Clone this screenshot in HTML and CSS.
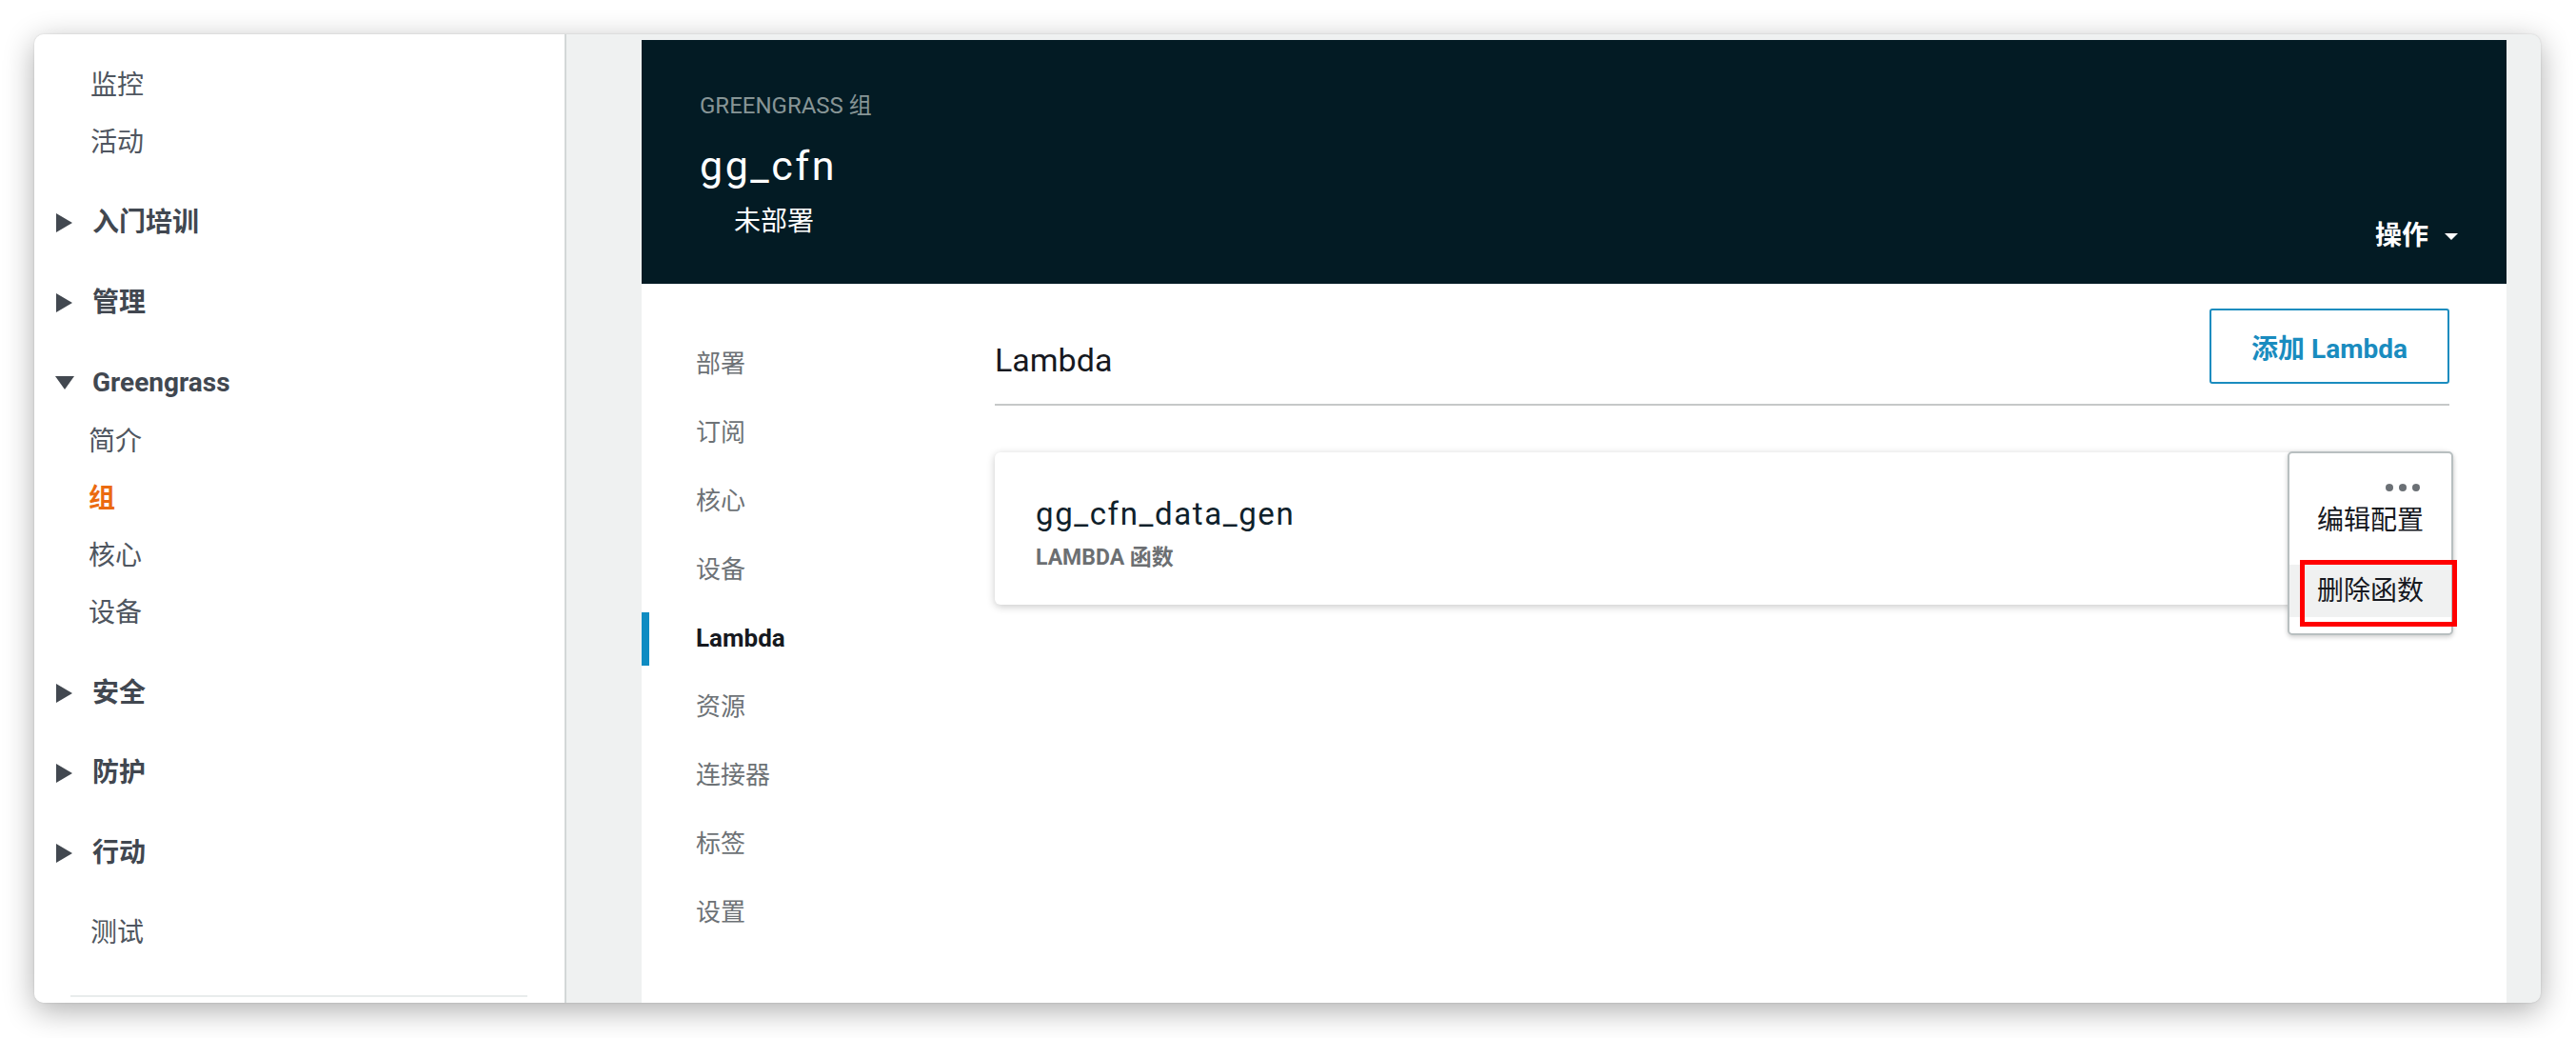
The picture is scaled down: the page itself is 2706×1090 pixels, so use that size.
FILE: index.html
```html
<!DOCTYPE html>
<html lang="zh-CN">
<head>
<meta charset="utf-8">
<title>Greengrass 组 - gg_cfn</title>
<link rel="stylesheet" href="styles.css">
</head>
<body>
<div class="window">
  <aside class="sidebar">
    <ul class="nav-block">
      <li class="nav-item">监控</li>
      <li class="nav-item">活动</li>
    </ul>
    <div class="nav-block nav-head"><span class="caret"><svg width="17" height="20" viewBox="0 0 17 20"><polygon points="0,0 17,10 0,20" fill="#424850"/></svg></span>入门培训</div>
    <div class="nav-block nav-head"><span class="caret"><svg width="17" height="20" viewBox="0 0 17 20"><polygon points="0,0 17,10 0,20" fill="#424850"/></svg></span>管理</div>
    <div class="nav-block">
      <div class="nav-head"><span class="caret caret-down"><svg width="20" height="14" viewBox="0 0 20 14"><polygon points="0,0 20,0 10,14" fill="#424850"/></svg></span>Greengrass</div>
      <ul class="nav-sub">
        <li class="nav-item">简介</li>
        <li class="nav-item nav-active">组</li>
        <li class="nav-item">核心</li>
        <li class="nav-item">设备</li>
      </ul>
    </div>
    <div class="nav-block nav-head"><span class="caret"><svg width="17" height="20" viewBox="0 0 17 20"><polygon points="0,0 17,10 0,20" fill="#424850"/></svg></span>安全</div>
    <div class="nav-block nav-head"><span class="caret"><svg width="17" height="20" viewBox="0 0 17 20"><polygon points="0,0 17,10 0,20" fill="#424850"/></svg></span>防护</div>
    <div class="nav-block nav-head"><span class="caret"><svg width="17" height="20" viewBox="0 0 17 20"><polygon points="0,0 17,10 0,20" fill="#424850"/></svg></span>行动</div>
    <ul class="nav-block">
      <li class="nav-item">测试</li>
    </ul>
    <div class="nav-divider"></div>
  </aside>

  <main class="main">
    <header class="hero">
      <div class="hero-left">
        <div class="eyebrow">GREENGRASS 组</div>
        <h1 class="hero-title">gg_cfn</h1>
        <div class="hero-status">未部署</div>
      </div>
      <div class="hero-action">操作<svg class="hero-caret" width="14" height="7" viewBox="0 0 14 7"><polygon points="0,0 14,0 7,7" fill="#ffffff"/></svg></div>
    </header>

    <section class="panel">
      <nav class="tabs">
        <div class="tab">部署</div>
        <div class="tab">订阅</div>
        <div class="tab">核心</div>
        <div class="tab">设备</div>
        <div class="tab tab-active">Lambda</div>
        <div class="tab">资源</div>
        <div class="tab">连接器</div>
        <div class="tab">标签</div>
        <div class="tab">设置</div>
      </nav>

      <div class="content">
        <div class="content-head">
          <h2 class="content-title">Lambda</h2>
          <button class="btn-outline">添加 Lambda</button>
        </div>

        <div class="card">
          <div class="card-title">gg_cfn_data_gen</div>
          <div class="card-sub">LAMBDA 函数</div>

          <div class="menu">
            <div class="menu-dots"><span></span><span></span><span></span></div>
            <div class="menu-item">编辑配置</div>
            <div class="menu-item menu-item-hover">删除函数<span class="annot"></span></div>
          </div>
        </div>
      </div>
    </section>
  </main>
</div>
</body>
</html>
```

FILE: styles.css
```css
* {
  box-sizing: border-box;
}

html, body {
  margin: 0;
  padding: 0;
  background: #ffffff;
}

body {
  width: 2706px;
  height: 1090px;
  overflow: hidden;
  font-family: Roboto, "Noto Sans CJK SC", sans-serif;
  color: #16191f;
}

ul {
  list-style: none;
  margin: 0;
  padding: 0;
}

h1, h2 {
  margin: 0;
  font-weight: normal;
}

.window {
  margin: 36px 0 0 36px;
  width: 2633px;
  height: 1017px;
  border-radius: 10px;
  overflow: hidden;
  display: flex;
  background: #eff1f1;
  box-shadow: 0 8px 32px rgba(0, 0, 0, 0.32), 0 0 2px rgba(0, 0, 0, 0.15);
}

/* ---------- sidebar ---------- */
.sidebar {
  width: 559px;
  flex: none;
  background: #ffffff;
  border-right: 2px solid #d3d7d7;
  padding: 24px 0 0 59px;
  font-size: 28px;
  color: #4f5660;
}

.nav-block + .nav-block {
  margin-top: 24px;
}

.nav-item {
  height: 60px;
  line-height: 60px;
}

.nav-active {
  color: #eb6a10;
  font-weight: 700;
}

.nav-head {
  height: 60px;
  line-height: 60px;
  font-weight: 700;
  color: #414750;
  display: flex;
  align-items: center;
  margin-left: -36px;
}

.caret {
  width: 38px;
  flex: none;
  display: inline-flex;
  align-items: center;
}

.caret-down svg {
  margin-left: -1px;
}

.nav-sub {
  margin-top: 2px;
  margin-left: -2px;
}

.nav-divider {
  margin: 35px 0 0 -21px;
  width: 480px;
  height: 2px;
  background: #e9ecec;
}

/* ---------- main ---------- */
.main {
  flex: 1;
  display: flex;
  flex-direction: column;
  padding: 6px 36px 0 79px;
}

.hero {
  background: #031b24;
  color: #ffffff;
  display: flex;
  justify-content: space-between;
  align-items: flex-end;
  padding: 54px 51px 30px 61px;
}

.eyebrow {
  font-size: 24px;
  line-height: 30px;
  color: #879596;
}

.hero-title {
  margin-top: 23px;
  font-size: 43px;
  line-height: 50px;
  letter-spacing: 2.5px;
  color: #ffffff;
}

.hero-status {
  margin: 14px 0 15px 36px;
  font-size: 28px;
  line-height: 40px;
}

.hero-action {
  display: flex;
  align-items: center;
  font-size: 28px;
  line-height: 40px;
  font-weight: 700;
}

.hero-caret {
  margin-left: 17px;
}

.panel {
  flex: 1;
  background: #ffffff;
  display: flex;
}

.tabs {
  width: 371px;
  flex: none;
  padding-top: 48px;
}

.tab {
  position: relative;
  height: 72px;
  line-height: 72px;
  padding-left: 57px;
  font-size: 26px;
  color: #6d7276;
}

.tab-active {
  color: #16191f;
  font-weight: 700;
}

.tab-active::before {
  content: "";
  position: absolute;
  left: 0;
  top: 9px;
  width: 8px;
  height: 56px;
  background: #0f8cc2;
}

.content {
  flex: 1;
  padding: 26px 60px 0 0;
}

.content-head {
  display: flex;
  justify-content: space-between;
  align-items: flex-end;
  padding-bottom: 21px;
  border-bottom: 2px solid #c6c8c8;
}

.content-title {
  font-size: 34px;
  line-height: 40px;
  margin-bottom: 5px;
  color: #16191f;
}

.btn-outline {
  width: 252px;
  height: 79px;
  border: 2px solid #1a8cbf;
  border-radius: 3px;
  background: #ffffff;
  color: #1a8cbf;
  font-family: inherit;
  font-size: 28px;
  font-weight: 700;
  padding: 0;
}

.card {
  position: relative;
  margin-top: 49px;
  height: 160px;
  border-radius: 6px;
  background: #ffffff;
  box-shadow: 0 2px 8px rgba(0, 0, 0, 0.22);
  padding: 46px 0 0 43px;
}

.card-title {
  font-size: 33px;
  line-height: 38px;
  letter-spacing: 1.6px;
  color: #0f212b;
}

.card-sub {
  margin-top: 13px;
  font-size: 23px;
  line-height: 28px;
  font-weight: 700;
  color: #6c6f72;
}

.menu {
  position: absolute;
  top: -1px;
  right: -4px;
  width: 174px;
  background: #ffffff;
  border: 2px solid #b8bfc0;
  border-radius: 5px;
  box-shadow: 0 2px 5px rgba(0, 0, 0, 0.2);
  padding: 32px 0 17px 0;
}

.menu-dots {
  display: flex;
  justify-content: flex-end;
  gap: 6px;
  padding-right: 33px;
  height: 8px;
}

.menu-dots span {
  width: 8px;
  height: 8px;
  border-radius: 50%;
  background: #6b7075;
}

.menu-item {
  position: relative;
  margin-top: 4px;
  height: 54px;
  line-height: 54px;
  padding-left: 29px;
  font-size: 28px;
  color: #16191f;
}

.menu-item-hover {
  margin-top: 19px;
  height: 55px;
  line-height: 55px;
  background: #f0f1f1;
}

.annot {
  position: absolute;
  left: 11px;
  right: -6px;
  top: -5px;
  bottom: -10px;
  border: 5px solid #ff0000;
}
```
